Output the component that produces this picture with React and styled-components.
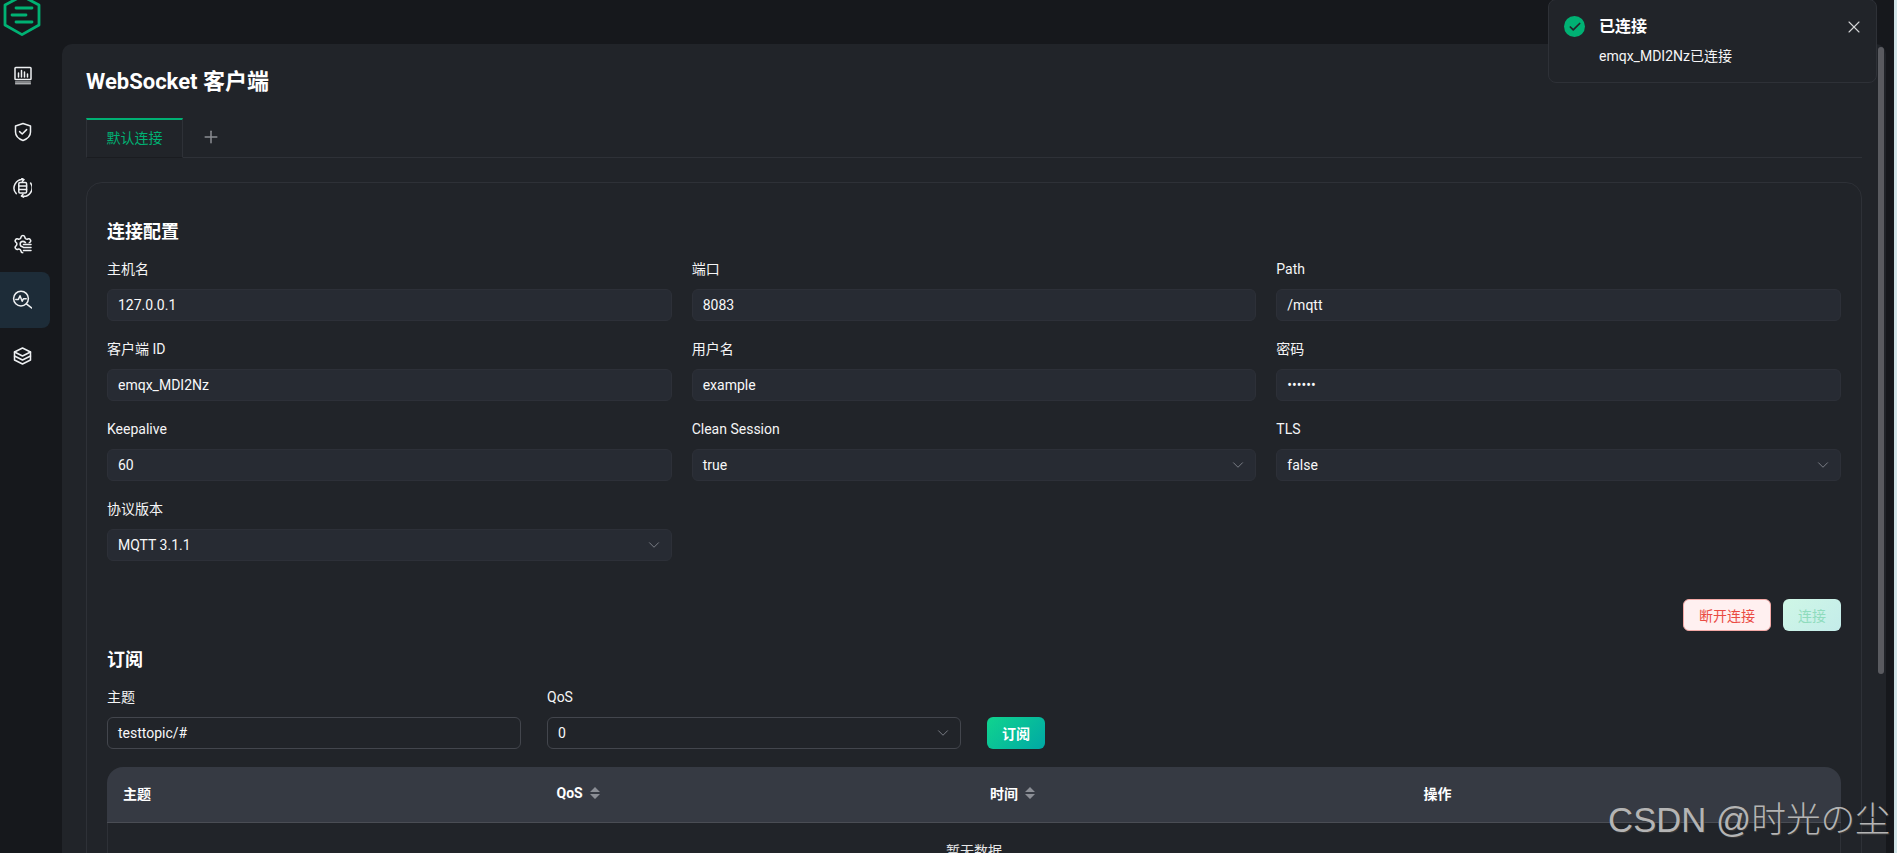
import React from "react";
import styled, { createGlobalStyle } from "styled-components";
import { ChevronDown, Plus, X, Check } from "lucide-react";

const GlobalStyle = createGlobalStyle`
  html, body {
    margin: 0;
    padding: 0;
    height: 100%;
    overflow: hidden;
    background: #16181c;
  }
  * {
    box-sizing: border-box;
  }
  body {
    font-family: Roboto, "Noto Sans CJK SC", sans-serif;
    color: #f2f3f4;
  }
`;

const Page = styled.div`
  position: relative;
  display: flex;
  width: 100vw;
  height: 100vh;
  overflow: hidden;
  padding-right: 11px;
  background: #16181c;
`;

const Sidebar = styled.nav`
  flex: 0 0 62px;
  display: flex;
  flex-direction: column;
`;

const LogoBox = styled.div`
  height: 48px;
`;

const NavList = styled.div`
  display: flex;
  flex-direction: column;
`;

const NavItem = styled.div`
  width: 50px;
  height: 56px;
  display: flex;
  align-items: center;
  justify-content: center;
  padding-right: 6px;
  color: #eef0f2;
  border-radius: 0 8px 8px 0;
  background: ${(props) => (props.active ? "#1d2c38" : "transparent")};
`;

const Main = styled.main`
  flex: 1;
  min-width: 0;
  display: flex;
  flex-direction: column;
  padding-top: 44px;
`;

const Panel = styled.section`
  position: relative;
  flex: 1;
  background: #212429;
  border-radius: 10px 10px 0 0;
  padding: 24px 24px 0;
  overflow: hidden;
`;

const Thumb = styled.div`
  position: absolute;
  top: 3px;
  right: 2px;
  width: 6px;
  height: 627px;
  border-radius: 3px;
  background: #5a5b60;
`;

const Title = styled.h1`
  margin: 0;
  font-size: 22px;
  line-height: 28px;
  font-weight: 700;
  color: #fff;
`;

const Tabs = styled.div`
  display: flex;
  align-items: stretch;
  height: 40px;
  margin-top: 22px;
  border-bottom: 1px solid #2e3137;
`;

const Tab = styled.div`
  width: 97px;
  display: flex;
  align-items: center;
  justify-content: center;
  padding-bottom: 3px;
  font-size: 14px;
  color: #00b173;
  border: 1px solid #2e3137;
  border-top: 2px solid #00b173;
  border-bottom: 1px solid #1a1c20;
  margin-bottom: -1px;
`;

const AddTab = styled.div`
  width: 56px;
  display: flex;
  align-items: center;
  justify-content: center;
  padding-bottom: 1px;
  color: #8b8d92;
`;

const Card = styled.div`
  margin-top: 24px;
  padding: 36px 20px 0;
  border: 1px solid #2e3137;
  border-radius: 16px;
  height: 800px;
`;

const SectionTitle = styled.h2`
  margin: 0 0 13px;
  font-size: 18px;
  line-height: 26px;
  font-weight: 700;
  color: #fff;
`;

const FormGrid = styled.div`
  display: grid;
  grid-template-columns: repeat(3, 1fr);
  column-gap: 20px;
  row-gap: 17px;
`;

const Item = styled.div`
  min-width: 0;
`;

const Label = styled.div`
  font-size: 14px;
  line-height: 22px;
  margin-bottom: 9px;
  color: #f5f5f6;
`;

const Field = styled.div`
  height: 32px;
  display: flex;
  align-items: center;
  justify-content: space-between;
  padding: 0 10px;
  font-size: 14px;
  color: #f8f8f9;
  border-radius: 6px;
  background: ${(props) => (props.outlined ? "#212429" : "#272b33")};
  border: 1px solid ${(props) => (props.outlined ? "#43464d" : "#2d3038")};
`;

const Actions = styled.div`
  display: flex;
  justify-content: flex-end;
  gap: 12px;
  margin-top: 38px;
`;

const Button = styled.div`
  height: 32px;
  display: flex;
  align-items: center;
  justify-content: center;
  font-size: 14px;
  border-radius: 6px;
  width: ${(props) => props.width || "58px"};
`;

const DisconnectButton = styled(Button)`
  color: #ea4b43;
  background: #fff0f0;
  border: 1px solid #f3a9a6;
`;

const ConnectButton = styled(Button)`
  color: #8fdcbd;
  background: linear-gradient(135deg, #cff7e6, #c4ecea);
`;

const SubscribeButton = styled(Button)`
  color: #fff;
  font-weight: 700;
  background: linear-gradient(135deg, #10d48e, #00a8a5);
`;

const SubSection = styled.div`
  margin-top: 16px;
`;

const SubForm = styled.div`
  display: grid;
  grid-template-columns: 414px 414px 58px;
  column-gap: 26px;
  align-items: end;
`;

const Table = styled.div`
  margin-top: 18px;
`;

const TableHead = styled.div`
  display: grid;
  grid-template-columns: repeat(4, 1fr);
  height: 56px;
  background: #363a43;
  border-bottom: 1px solid #4a4d54;
  border-radius: 16px 16px 0 0;
`;

const HeadCell = styled.div`
  display: flex;
  align-items: center;
  gap: 7px;
  padding: 0 0 3px 16px;
  font-size: 14px;
  font-weight: 700;
  color: #fff;
`;

const Empty = styled.div`
  height: 60px;
  padding-top: 16px;
  text-align: center;
  font-size: 14px;
  line-height: 24px;
  color: #e8e9ea;
  border-left: 1px solid #2e3137;
  border-right: 1px solid #2e3137;
`;

const Toast = styled.div`
  position: absolute;
  top: -1px;
  right: 20px;
  width: 329px;
  height: 84px;
  padding: 15px 12px 0 15px;
  display: grid;
  grid-template-columns: 21px 1fr 20px;
  column-gap: 15px;
  background: #212429;
  border: 1px solid #2e3137;
  border-radius: 8px;
`;

const ToastIcon = styled.div`
  width: 21px;
  height: 21px;
  margin-top: 1px;
  border-radius: 50%;
  background: #00b173;
  color: #212429;
  display: flex;
  align-items: center;
  justify-content: center;
`;

const ToastTitle = styled.div`
  font-size: 16px;
  line-height: 24px;
  font-weight: 700;
  color: #fff;
  margin-left: -1px;
`;

const ToastText = styled.div`
  margin-top: 6px;
  margin-left: -1px;
  font-size: 14px;
  line-height: 22px;
  color: #f5f5f6;
`;

const ToastClose = styled.div`
  color: #d4d5d7;
  padding-top: 2px;
`;

const Watermark = styled.div`
  position: absolute;
  right: 7px;
  bottom: 12px;
  font-family: "Liberation Sans", "Noto Sans CJK JP", sans-serif;
  font-size: 34.7px;
  line-height: 42px;
  font-weight: 300;
  color: #b4b4b4;
  text-shadow: 1px 1px 1px #3a3a3a;
  white-space: nowrap;
`;

const EdgeLine = styled.div`
  position: absolute;
  top: 0;
  right: 0;
  bottom: 0;
  width: 3px;
  background: #d3e6ea;
`;

const Arrow = styled(ChevronDown)`
  flex: none;
  margin-right: -2px;
`;

const Logo = () => (
  <svg width="44" height="36" viewBox="0 0 44 36" fill="none" stroke="#00b173" strokeWidth="2.8">
    <path d="M22 -4 L39 5 V25 L22 34.6 L5 25 V5 Z" strokeLinejoin="round" />
    <path d="M16 8 H32 M12 15 H26 M16 22 H32" strokeLinecap="round" />
  </svg>
);

const NavSvg = ({ children }) => (
  <svg
    width="20"
    height="20"
    viewBox="0 0 20 20"
    fill="none"
    stroke="currentColor"
    strokeWidth="1.5"
    strokeLinecap="round"
    strokeLinejoin="round"
  >
    {children}
  </svg>
);

const MonitorIcon = () => (
  <NavSvg>
    <rect x="3" y="1.5" width="16" height="12" rx="0.8" />
    <path d="M6.5 11V7 M9.5 11V4.5 M12.5 11V6 M15.5 11V8" />
    <path d="M3.5 16H18.5 M3.5 17.8H18.5" strokeWidth="1" />
  </NavSvg>
);

const ShieldIcon = () => (
  <NavSvg>
    <path d="M11 1.5 L18.5 4 V10 C18.5 14 15 17 11 18.5 C7 17 3.5 14 3.5 10 V4 Z" />
    <path d="M7.6 9.6 L10.2 12 L14.6 7.6" />
  </NavSvg>
);

const SyncIcon = () => (
  <NavSvg>
    <path d="M4.2 15.6 A8.5 8.5 0 0 1 12 1.6 L9.8 0.4 M12 1.6 L10.4 3.4" />
    <path d="M18.6 5 A8.5 8.5 0 0 1 9.4 18 L11.6 19.2 M9.4 18 L11 16.2" />
    <rect x="6.8" y="4.6" width="7.8" height="10.4" rx="1.2" />
    <path d="M6.8 8H14.6 M6.8 11.4H14.6" />
  </NavSvg>
);

const GearIcon = () => (
  <NavSvg>
    <mask id="gear-cut" maskUnits="userSpaceOnUse" x="0" y="0" width="24" height="24">
      <rect width="24" height="24" fill="#fff" stroke="none" />
      <rect x="12.5" y="11" width="12" height="13" fill="#000" stroke="none" />
    </mask>
    <g transform="translate(0.6 -0.2) scale(0.86)" mask="url(#gear-cut)" strokeWidth="1.8">
      <path d="M9.671 4.136a2.34 2.34 0 0 1 4.659 0 2.34 2.34 0 0 0 3.319 1.915 2.34 2.34 0 0 1 2.33 4.033 2.34 2.34 0 0 0 0 3.831 2.34 2.34 0 0 1-2.33 4.033 2.34 2.34 0 0 0-3.319 1.915 2.34 2.34 0 0 1-4.659 0 2.34 2.34 0 0 0-3.32-1.915 2.34 2.34 0 0 1-2.33-4.033 2.34 2.34 0 0 0 0-3.831A2.34 2.34 0 0 1 6.35 6.051a2.34 2.34 0 0 0 3.319-1.915" />
      <circle cx="12" cy="12" r="3.2" />
    </g>
    <path d="M11.5 10.5H19 M11.5 13.5H19 M11.5 16.5H19" />
  </NavSvg>
);

const InspectIcon = () => (
  <NavSvg>
    <circle cx="9" cy="8.6" r="7.4" />
    <path d="M14.4 13.8 L19.6 18" />
    <path d="M3.8 9.4H6.4 L8 5.8 L10.2 11.2 L11.4 8.8H14.2" />
  </NavSvg>
);

const LayersIcon = () => (
  <NavSvg>
    <path d="M10.5 2 L18.5 6 V14 L10.5 18 L2.5 14 V6 Z" />
    <path d="M2.5 6 L10.5 10 L18.5 6 M2.5 10 L10.5 14 L18.5 10" />
  </NavSvg>
);

const SortIcon = () => (
  <svg width="10" height="12" viewBox="0 0 10 12" fill="#8b8e95">
    <path d="M5 0 L10 5 H0 Z M0 7 H10 L5 12 Z" />
  </svg>
);

const navIcons = [MonitorIcon, ShieldIcon, SyncIcon, GearIcon, InspectIcon, LayersIcon];

const connectionFields = [
  { label: "主机名", value: "127.0.0.1" },
  { label: "端口", value: "8083" },
  { label: "Path", value: "/mqtt" },
  { label: "客户端 ID", value: "emqx_MDI2Nz" },
  { label: "用户名", value: "example" },
  { label: "密码", value: "••••••" },
  { label: "Keepalive", value: "60" },
  { label: "Clean Session", value: "true", select: true },
  { label: "TLS", value: "false", select: true },
  { label: "协议版本", value: "MQTT 3.1.1", select: true },
];

const App = () => (
  <Page>
    <GlobalStyle />
    <Sidebar>
      <LogoBox>
        <Logo />
      </LogoBox>
      <NavList>
        {navIcons.map((Icon, i) => (
          <NavItem key={i} active={i === 4}>
            <Icon />
          </NavItem>
        ))}
      </NavList>
    </Sidebar>
    <Main>
      <Panel>
        <Thumb />
        <Title>WebSocket 客户端</Title>
        <Tabs>
          <Tab>默认连接</Tab>
          <AddTab>
            <Plus size={20} strokeWidth={1.8} />
          </AddTab>
        </Tabs>
        <Card>
          <SectionTitle>连接配置</SectionTitle>
          <FormGrid>
            {connectionFields.map((f) => (
              <Item key={f.label}>
                <Label>{f.label}</Label>
                <Field>
                  {f.value}
                  {f.select && <Arrow size={18} strokeWidth={1.1} color="#8b8e95" />}
                </Field>
              </Item>
            ))}
          </FormGrid>
          <Actions>
            <DisconnectButton width="88px">断开连接</DisconnectButton>
            <ConnectButton>连接</ConnectButton>
          </Actions>
          <SubSection>
            <SectionTitle>订阅</SectionTitle>
            <SubForm>
              <Item>
                <Label>主题</Label>
                <Field outlined>testtopic/#</Field>
              </Item>
              <Item>
                <Label>QoS</Label>
                <Field outlined>
                  0
                  <Arrow size={18} strokeWidth={1.1} color="#8b8e95" />
                </Field>
              </Item>
              <SubscribeButton>订阅</SubscribeButton>
            </SubForm>
          </SubSection>
          <Table>
            <TableHead>
              <HeadCell>主题</HeadCell>
              <HeadCell>
                QoS <SortIcon />
              </HeadCell>
              <HeadCell>
                时间 <SortIcon />
              </HeadCell>
              <HeadCell>操作</HeadCell>
            </TableHead>
            <Empty>暂无数据</Empty>
          </Table>
        </Card>
      </Panel>
    </Main>
    <Toast>
      <ToastIcon>
        <Check size={14} strokeWidth={3} />
      </ToastIcon>
      <div>
        <ToastTitle>已连接</ToastTitle>
        <ToastText>emqx_MDI2Nz已连接</ToastText>
      </div>
      <ToastClose>
        <X size={20} strokeWidth={1.3} />
      </ToastClose>
    </Toast>
    <Watermark>CSDN @时光の尘</Watermark>
    <EdgeLine />
  </Page>
);

export default App;
